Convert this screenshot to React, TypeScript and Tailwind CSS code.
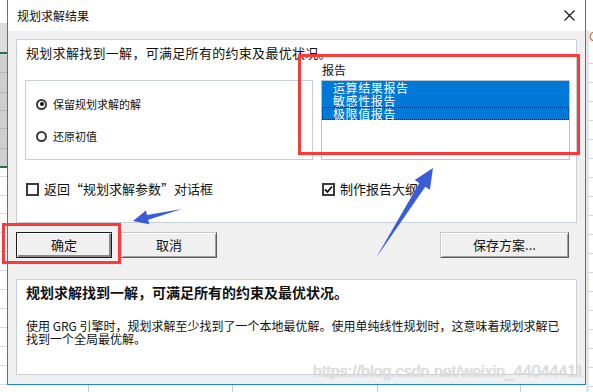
import React from "react";

const cjk = "font-['Noto_Sans_CJK_SC','Noto_Sans',sans-serif]";

function Radio({ checked, label }: { checked?: boolean; label: string }) {
  return (
    <div className="flex items-center h-[14px]">
      <div className="w-[11px] h-[11px] rounded-full border-2 border-[#3a3a3a] flex items-center justify-center bg-white">
        {checked && <div className="w-[4px] h-[4px] rounded-full bg-[#111]" />}
      </div>
      <span className="ml-[6px] text-[11px] leading-[14px] text-[#111]">{label}</span>
    </div>
  );
}

function Check({ checked, label }: { checked?: boolean; label: string }) {
  return (
    <div className="flex items-center h-[14px]">
      <div className="w-[13px] h-[13px] border-2 border-[#3a3a3a] bg-white flex items-center justify-center">
        {checked && (
          <svg width="9" height="9" viewBox="0 0 9 9">
            <path d="M1 4.5 L3.5 7 L8 1.5" fill="none" stroke="#111" strokeWidth="1.8" />
          </svg>
        )}
      </div>
      <span className="ml-[5px] text-[13px] leading-[14px] text-[#111] whitespace-nowrap">{label}</span>
    </div>
  );
}

function Btn({ label, w, def }: { label: string; w: string; def?: boolean }) {
  return (
    <div
      className={`${w} h-[26px] flex items-center justify-center text-[13px] leading-[14px] text-[#111] bg-[#f0f0f0] border ${
        def
          ? "border-[#1a1a1a] shadow-[inset_1px_1px_0_#fff,inset_-2px_-2px_0_#8a8a8a]"
          : "border-t-[#c8c8c8] border-l-[#c8c8c8] border-r-[#5a5a5a] border-b-[#5a5a5a] shadow-[inset_1px_1px_0_#fff,inset_-1px_-1px_0_#a0a0a0]"
      }`}
    >
      {label}
    </div>
  );
}

export default function App() {
  const leftLines = [72, 92, 110, 128, 148];
  const leftWhite = [176, 195, 213, 232, 251, 270, 289, 308, 327, 346, 365, 384];
  const rightLines = [63, 82, 101, 120, 139, 158, 177, 196, 215, 234, 253, 272, 291, 310, 329, 348, 367, 386];
  const bottomCols = [88, 232, 377, 520];
  return (
    <div className={`relative w-[593px] h-[392px] overflow-hidden bg-white ${cjk}`}>
      {/* Excel background - left */}
      <div className="absolute left-0 top-[23px] w-[7px] h-[32px] bg-[#dcdcdc]" />
      <div className="absolute left-0 top-[55px] w-[7px] h-[112px] bg-[#cfcfcf]" />
      <div className="absolute left-0 top-[52px] w-[7px] h-[2px] bg-[#217346]" />
      <div className="absolute left-0 top-[166px] w-[7px] h-[2px] bg-[#217346]" />
      {leftLines.map((y) => (
        <div key={y} className="absolute left-0 w-[7px] h-px bg-[#b5b5b5]" style={{ top: y }} />
      ))}
      {leftWhite.map((y) => (
        <div key={y} className="absolute left-0 w-[7px] h-px bg-[#dadada]" style={{ top: y }} />
      ))}
      {/* right */}
      <div className="absolute left-[586px] top-[30px] w-[3px] h-[362px] bg-[#e6e6e6]" />
      <div className="absolute left-[589px] top-[30px] text-[12px] leading-[14px] text-[#c07020] font-['Liberation_Sans',sans-serif]">C</div>
      {rightLines.map((y) => (
        <div key={y} className="absolute left-[589px] w-[4px] h-px bg-[#d4d4d4]" style={{ top: y }} />
      ))}
      {bottomCols.map((x) => (
        <div key={x} className="absolute top-[385px] w-px h-[7px] bg-[#c8c8c8]" style={{ left: x }} />
      ))}

      {/* Dialog */}
      <div className="absolute left-[7px] top-0 w-[579px] h-[385px] border-x border-b border-[#1883d7] flex flex-col bg-[#f0f0f0]">
        {/* title bar */}
        <div className="h-[31px] bg-white flex items-center justify-between pl-[9px] pr-[10px] shrink-0">
          <span className="text-[12px] leading-[14px] text-[#111]">规划求解结果</span>
          <svg width="11" height="11" viewBox="0 0 11 11">
            <path d="M0.5 0.5 L10.5 10.5 M10.5 0.5 L0.5 10.5" stroke="#111" strokeWidth="1.1" />
          </svg>
        </div>
        {/* body */}
        <div className="flex flex-col px-[8px] pt-[8px]">
          {/* top panel */}
          <div className="h-[184px] bg-white border border-[#c4d0dc] pt-[6px] pl-[8px] pr-[6px] flex flex-col">
            <div className="h-[14px] pl-[1px] text-[13px] leading-[14px] text-[#111] tracking-[0.3px] whitespace-nowrap">
              规划求解找到一解，可满足所有的约束及最优状况。
            </div>
            <div className="flex gap-[8px]">
              <div className="w-[288px] flex flex-col">
                <div className="h-[20px]" />
                <div className="h-[80px] border border-[#c4d0dc] bg-white pt-[16px] pl-[10px] flex flex-col gap-[18px]">
                  <Radio checked label="保留规划求解的解" />
                  <Radio label="还原初值" />
                </div>
                <div className="mt-[22px] pl-[1px]">
                  <Check label="返回“规划求解参数”对话框" />
                </div>
              </div>
              <div className="w-[249px] flex flex-col">
                <div className="h-[20px] flex items-center pl-[1px] text-[12px] leading-[14px] text-[#111]">报告</div>
                <div className="h-[80px] border border-[#b9c4cf] bg-white flex flex-col">
                  <div className="h-[13px] bg-[#0078d7] text-white text-[12px] leading-[13px] pl-[11px] tracking-[0.6px]">运算结果报告</div>
                  <div className="h-[13px] bg-[#0078d7] text-white text-[12px] leading-[13px] pl-[11px] tracking-[0.6px]">敏感性报告</div>
                  <div className="h-[13px] bg-[#0078d7] text-white text-[12px] leading-[11px] pl-[10px] tracking-[0.6px] border border-dotted border-[#1a1a1a]">极限值报告</div>
                </div>
                <div className="mt-[22px] pl-[1px]">
                  <Check checked label="制作报告大纲" />
                </div>
              </div>
            </div>
          </div>
          {/* buttons */}
          <div className="mt-[9px] flex items-center gap-[9px]">
            <Btn label="确定" w="w-[96px]" def />
            <Btn label="取消" w="w-[96px]" />
            <div className="ml-auto mr-[8px]">
              <Btn label="保存方案..." w="w-[129px]" />
            </div>
          </div>
          {/* bottom panel */}
          <div className="mt-[21px] h-[96px] bg-white border border-[#c4d0dc] pt-[5px] pl-[9px] flex flex-col">
            <div className="h-[14px] text-[14px] leading-[14px] font-bold text-[#111] whitespace-nowrap">
              规划求解找到一解，可满足所有的约束及最优状况。
            </div>
            <div className="mt-[20px] w-[540px] text-[12px] leading-[13px] text-[#111]">
              使用 GRG 引擎时，规划求解至少找到了一个本地最优解。使用单纯线性规划时，这意味着规划求解已找到一个全局最优解。
            </div>
          </div>
        </div>
      </div>

      {/* watermark */}
      <div className="absolute left-[313px] top-[363px] text-[16px] leading-[18px] text-[#e2e2e2] font-['Liberation_Sans',sans-serif] [text-shadow:0_0_1px_#b8b8b8] whitespace-nowrap">
        https://blog.csdn.net/weixin_44044411
      </div>

      {/* annotations */}
      <div className="absolute left-[298px] top-[54px] w-[282px] h-[101px] border-[3.5px] border-[#fc3a3a]" />
      <div className="absolute left-[2px] top-[223px] w-[119px] h-[41px] border-[3.5px] border-[#fc3a3a]" />
      <svg className="absolute left-0 top-0" width="593" height="392" viewBox="0 0 593 392">
        <polygon
          points="433,168 429.9,189.7 425.3,186.8 376,258 419.3,183 414.7,180.1"
          fill="#3a5cd8"
        />
        <polygon
          points="133,221 145.9,210.6 147,215 182,209 148.2,219.8 149.3,224.2"
          fill="#3a5cd8"
        />
      </svg>
    </div>
  );
}
